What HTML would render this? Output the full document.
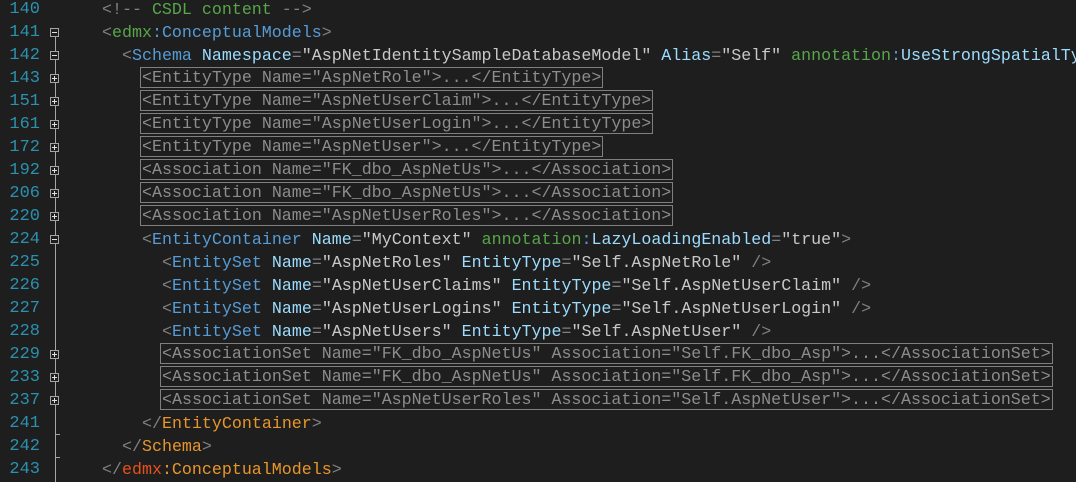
<!DOCTYPE html>
<html><head><meta charset="utf-8"><style>
body{margin:0;width:1076px;height:482px;background:#1e1e1e;overflow:hidden;position:relative;font-family:"Liberation Mono",monospace;font-size:16.65px}
.n{position:absolute;left:0;width:40px;text-align:right;color:#2b91af;line-height:23px;height:23px;font-size:17px}
.l{position:absolute;line-height:21px;height:21px;white-space:pre;color:#c8c8c8}
.bx{border:1px solid #7f7f7f;color:#8c8c8c;padding:0 1px;margin-left:-2px}
.p{color:#808080}.t{color:#569cd6}.a{color:#9cdcfe}.s{color:#c8c8c8}.g{color:#57a64a}.o{color:#e8962c}.r{color:#e8501c}
.f{position:absolute;left:50px;width:7px;height:7px;border:1px solid #a5a5a5;background:#1e1e1e}
.f:before{content:"";position:absolute;left:1px;top:3px;width:5px;height:1px;background:#e0e0e0}
.f.pl:after{content:"";position:absolute;left:3px;top:1px;width:1px;height:5px;background:#e0e0e0}
.v{position:absolute;left:55px;width:1px;background:#a5a5a5}
.tk{position:absolute;left:55px;width:5px;height:1px;background:#a5a5a5}
</style></head><body>
<div class="v" style="top:32px;height:450px"></div>
<div class="tk" style="top:434px"></div>
<div class="tk" style="top:457px"></div>

<div class="n" style="top:-2px">140</div>
<div class="n" style="top:21px">141</div>
<div class="n" style="top:44px">142</div>
<div class="n" style="top:67px">143</div>
<div class="n" style="top:90px">151</div>
<div class="n" style="top:113px">161</div>
<div class="n" style="top:136px">172</div>
<div class="n" style="top:159px">192</div>
<div class="n" style="top:182px">206</div>
<div class="n" style="top:205px">220</div>
<div class="n" style="top:228px">224</div>
<div class="n" style="top:251px">225</div>
<div class="n" style="top:274px">226</div>
<div class="n" style="top:297px">227</div>
<div class="n" style="top:320px">228</div>
<div class="n" style="top:343px">229</div>
<div class="n" style="top:366px">233</div>
<div class="n" style="top:389px">237</div>
<div class="n" style="top:412px">241</div>
<div class="n" style="top:435px">242</div>
<div class="n" style="top:458px">243</div>

<div class="f" style="top:28px"></div>
<div class="f" style="top:51px"></div>
<div class="f pl" style="top:74px"></div>
<div class="f pl" style="top:97px"></div>
<div class="f pl" style="top:120px"></div>
<div class="f pl" style="top:143px"></div>
<div class="f pl" style="top:166px"></div>
<div class="f pl" style="top:189px"></div>
<div class="f pl" style="top:212px"></div>
<div class="f" style="top:235px"></div>
<div class="f pl" style="top:350px"></div>
<div class="f pl" style="top:373px"></div>
<div class="f pl" style="top:396px"></div>

<div class="l" style="top:-1px;left:102px"><span class="p">&lt;!--</span><span class="g"> CSDL content </span><span class="p">--&gt;</span></div>
<div class="l" style="top:22px;left:102px"><span class="p">&lt;</span><span class="g">edmx</span><span class="t">:ConceptualModels</span><span class="p">&gt;</span></div>
<div class="l" style="top:45px;left:122px"><span class="p">&lt;</span><span class="t">Schema</span> <span class="a">Namespace</span><span class="p">=</span>"AspNetIdentitySampleDatabaseModel" <span class="a">Alias</span><span class="p">=</span>"Self" <span class="g">annotation</span><span class="t">:</span><span class="a">UseStrongSpatialTypes</span></div>
<div class="l" style="top:67px;left:142px"><span class="bx">&lt;EntityType Name="AspNetRole"&gt;...&lt;/EntityType&gt;</span></div>
<div class="l" style="top:90px;left:142px"><span class="bx">&lt;EntityType Name="AspNetUserClaim"&gt;...&lt;/EntityType&gt;</span></div>
<div class="l" style="top:113px;left:142px"><span class="bx">&lt;EntityType Name="AspNetUserLogin"&gt;...&lt;/EntityType&gt;</span></div>
<div class="l" style="top:136px;left:142px"><span class="bx">&lt;EntityType Name="AspNetUser"&gt;...&lt;/EntityType&gt;</span></div>
<div class="l" style="top:159px;left:142px"><span class="bx">&lt;Association Name="FK_dbo_AspNetUs"&gt;...&lt;/Association&gt;</span></div>
<div class="l" style="top:182px;left:142px"><span class="bx">&lt;Association Name="FK_dbo_AspNetUs"&gt;...&lt;/Association&gt;</span></div>
<div class="l" style="top:205px;left:142px"><span class="bx">&lt;Association Name="AspNetUserRoles"&gt;...&lt;/Association&gt;</span></div>
<div class="l" style="top:229px;left:142px"><span class="p">&lt;</span><span class="t">EntityContainer</span> <span class="a">Name</span><span class="p">=</span>"MyContext" <span class="g">annotation</span><span class="t">:</span><span class="a">LazyLoadingEnabled</span><span class="p">=</span>"true"<span class="p">&gt;</span></div>
<div class="l" style="top:252px;left:162px"><span class="p">&lt;</span><span class="t">EntitySet</span> <span class="a">Name</span><span class="p">=</span>"AspNetRoles" <span class="a">EntityType</span><span class="p">=</span>"Self.AspNetRole" <span class="p">/&gt;</span></div>
<div class="l" style="top:275px;left:162px"><span class="p">&lt;</span><span class="t">EntitySet</span> <span class="a">Name</span><span class="p">=</span>"AspNetUserClaims" <span class="a">EntityType</span><span class="p">=</span>"Self.AspNetUserClaim" <span class="p">/&gt;</span></div>
<div class="l" style="top:298px;left:162px"><span class="p">&lt;</span><span class="t">EntitySet</span> <span class="a">Name</span><span class="p">=</span>"AspNetUserLogins" <span class="a">EntityType</span><span class="p">=</span>"Self.AspNetUserLogin" <span class="p">/&gt;</span></div>
<div class="l" style="top:321px;left:162px"><span class="p">&lt;</span><span class="t">EntitySet</span> <span class="a">Name</span><span class="p">=</span>"AspNetUsers" <span class="a">EntityType</span><span class="p">=</span>"Self.AspNetUser" <span class="p">/&gt;</span></div>
<div class="l" style="top:343px;left:162px"><span class="bx">&lt;AssociationSet Name="FK_dbo_AspNetUs" Association="Self.FK_dbo_Asp"&gt;...&lt;/AssociationSet&gt;</span></div>
<div class="l" style="top:366px;left:162px"><span class="bx">&lt;AssociationSet Name="FK_dbo_AspNetUs" Association="Self.FK_dbo_Asp"&gt;...&lt;/AssociationSet&gt;</span></div>
<div class="l" style="top:389px;left:162px"><span class="bx">&lt;AssociationSet Name="AspNetUserRoles" Association="Self.AspNetUser"&gt;...&lt;/AssociationSet&gt;</span></div>
<div class="l" style="top:413px;left:142px"><span class="p">&lt;/</span><span class="o">EntityContainer</span><span class="p">&gt;</span></div>
<div class="l" style="top:436px;left:122px"><span class="p">&lt;/</span><span class="o">Schema</span><span class="p">&gt;</span></div>
<div class="l" style="top:459px;left:102px"><span class="p">&lt;/</span><span class="r">edmx</span><span class="o">:ConceptualModels</span><span class="p">&gt;</span></div>
</body></html>
